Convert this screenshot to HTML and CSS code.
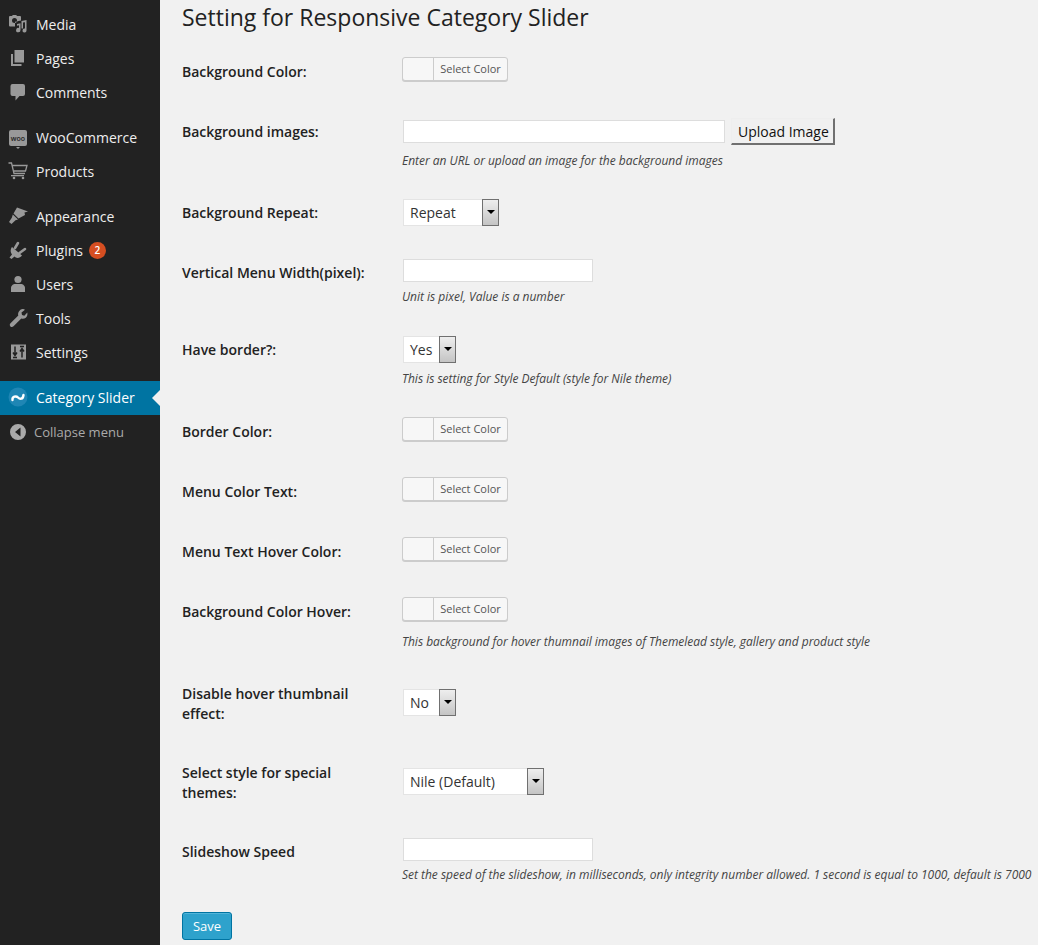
FILE: index.html
```html
<!DOCTYPE html>
<html lang="en">
<head>
<meta charset="utf-8">
<title>Setting for Responsive Category Slider</title>
<link rel="stylesheet" href="styles.css">
</head>
<body>
<div class="layout">
<nav class="sidebar">
  <ul class="menu">
    <li class="item"><svg class="icon" viewBox="0 0 20 20"><path fill-rule="evenodd" d="M2 2h2l.8-1h3.400l.8 1H12a1 1 0 0 1 1 1v3.500L7 7.800V12.500H2a1 1 0 0 1-1-1V3a1 1 0 0 1 1-1zM6.500 4a2.500 2.500 0 1 0 0 5 2.500 2.500 0 0 0 0-5z"/><path d="M9 10l3.500-.7v6.700a2.200 2.200 0 1 1-1.500-2v-2.700l-2 .4z"/><path d="M13.500 7l5-1v10.500a2 2 0 1 1-1.500-1.900V8.200l-2 .4V14.500h-1.500z"/></svg><span>Media</span></li>
    <li class="item"><svg class="icon" viewBox="0 0 20 20"><path d="M6.500 2H16v12.500H6.500z"/><path d="M3 6h2v10h8.500v2H3z"/></svg><span>Pages</span></li>
    <li class="item"><svg class="icon" viewBox="0 0 20 20"><path d="M4.500 2h10.500a2 2 0 0 1 2 2v8a2 2 0 0 1-2 2h-3.500l-4 4.500V14H4.500a2 2 0 0 1-2-2V4a2 2 0 0 1 2-2z"/></svg><span>Comments</span></li>
    <li class="item gap"><span class="woo"><span class="woo-text">woo</span></span><span>WooCommerce</span></li>
    <li class="item"><svg class="icon" viewBox="0 0 20 20"><path class="line" d="M0.500 2h3l2.500 10.500h11M4.500 4.500H19l-1.500 5.500H6"/><rect x="3" y="14" width="13" height="1.300"/><circle cx="6" cy="17" r="1.300"/><circle cx="15" cy="17" r="1.300"/></svg><span>Products</span></li>
    <li class="item gap"><svg class="icon" viewBox="0 0 20 20"><path d="M9 1.500l11 4-3.500 1 .5 2.500-6.500 3.500-5-5z"/><path d="M4.800 8.500l5.200 5-2.500.8L3.500 18l-2.500-2 2.800-4.200z"/></svg><span>Appearance</span></li>
    <li class="item"><svg class="icon" viewBox="0 0 20 20"><path d="M4 7l10 8.500c-2 3-6 3-7.500 1L3.500 19l-2-1.500 2.500-3c-2-2.500-1.500-5.500 0-7.500z"/><path class="pin" d="M7 8l3-5M11.500 13l5.500-4"/></svg><span>Plugins</span><span class="badge">2</span></li>
    <li class="item"><svg class="icon" viewBox="0 0 20 20"><circle cx="10" cy="5.500" r="3.600"/><path d="M3 18v-4c0-2.500 2.500-4 4-4h6c1.500 0 4 1.500 4 4v4z"/></svg><span>Users</span></li>
    <li class="item"><svg class="icon" viewBox="0 0 20 20"><path d="M14.500 1c1 0 2 .3 2.500.7L13.500 4.500l.5 2.500 2.300.7 3-3.200c.5 2.200-.2 4-1.500 5.200-1.300 1.100-3 1.300-4.500.8L5.500 18.300c-.9.900-2.300.9-3.100.1-.9-.9-.8-2.300.1-3.100L10.300 7.600c-.5-1.700-.1-3.400 1-4.700C12.200 1.800 13.300 1 14.500 1z"/></svg><span>Tools</span></li>
    <li class="item"><svg class="icon" viewBox="0 0 20 20"><rect x="3" y="2.500" width="15" height="15"/><path class="cut" d="M7 4.500v8.500M5 10.500l2 3 2-3M5 15.500h4M14 15.500V7M12 9.500l2-3 2 3M12 4.500h4"/></svg><span>Settings</span></li>
    <li class="item gap current"><svg class="logo" viewBox="0 0 20 20"><circle cx="10" cy="10" r="9.500"/><path d="M4.500 13c-.5-3.500 3.500-4.500 5.500-2.500s5 2 5.500-2.500"/></svg><span>Category Slider</span></li>
    <li class="item collapse"><svg class="icon" viewBox="0 0 20 20"><path fill-rule="evenodd" d="M10 2a8 8 0 1 1 0 16 8 8 0 0 1 0-16zM12.500 5.500L7 10l5.500 4.500z"/></svg><span>Collapse menu</span></li>
  </ul>
</nav>
<main class="content">
  <h2 class="title">Setting for Responsive Category Slider</h2>
  <table class="form">
    <tr class="row-color"><th>Background Color:</th><td><div class="picker"><span class="swatch"></span><span class="picker-label">Select Color</span></div></td></tr>
    <tr class="row-upload"><th>Background images:</th><td><div class="upload"><span class="input input-long"></span><span class="upload-btn">Upload Image</span></div><p class="desc desc-low">Enter an URL or upload an image for the background images</p></td></tr>
    <tr class="row-color"><th>Background Repeat:</th><td><div class="select select-repeat"><span class="select-value">Repeat</span><span class="arrow"></span></div></td></tr>
    <tr class="row-desc"><th>Vertical Menu Width(pixel):</th><td><span class="input input-short"></span><p class="desc">Unit is pixel, Value is a number</p></td></tr>
    <tr class="row-tall"><th>Have border?:</th><td><div class="select select-yes"><span class="select-value">Yes</span><span class="arrow"></span></div><p class="desc desc-low">This is setting for Style Default (style for Nile theme)</p></td></tr>
    <tr class="row-color"><th>Border Color:</th><td><div class="picker"><span class="swatch"></span><span class="picker-label">Select Color</span></div></td></tr>
    <tr class="row-color"><th>Menu Color Text:</th><td><div class="picker"><span class="swatch"></span><span class="picker-label">Select Color</span></div></td></tr>
    <tr class="row-color"><th>Menu Text Hover Color:</th><td><div class="picker"><span class="swatch"></span><span class="picker-label">Select Color</span></div></td></tr>
    <tr class="row-tall"><th>Background Color Hover:</th><td><div class="picker"><span class="swatch"></span><span class="picker-label">Select Color</span></div><p class="desc desc-picker">This background for hover thumnail images of Themelead style, gallery and product style</p></td></tr>
    <tr class="row-two"><th>Disable hover thumbnail effect:</th><td><div class="select select-no"><span class="select-value">No</span><span class="arrow"></span></div></td></tr>
    <tr class="row-two"><th>Select style for special themes:</th><td><div class="select select-style"><span class="select-value">Nile (Default)</span><span class="arrow"></span></div></td></tr>
    <tr class="row-desc"><th>Slideshow Speed</th><td><span class="input input-short"></span><p class="desc desc-high">Set the speed of the slideshow, in milliseconds, only integrity number allowed. 1 second is equal to 1000, default is 7000</p></td></tr>
  </table>
  <div class="actions"><span class="save">Save</span></div>
</main>
</div>
</body>
</html>
```
FILE: styles.css
```css
* { box-sizing: border-box; }
html, body { margin: 0; height: 945px; overflow: hidden; }
body { background: #f1f1f1; color: #444; font-family: "Open Sans", "Liberation Sans", sans-serif; font-size: 13px; }
.layout { display: flex; height: 945px; }
.sidebar { width: 160px; flex: none; background: #222; padding-top: 8px; }
.menu { list-style: none; margin: 0; padding: 0; }
.item { height: 34px; display: flex; align-items: center; padding: 0 0 2px 8px; color: #eee; font-size: 14px; position: relative; }
.item.gap { margin-top: 11px; }
.icon { width: 20px; height: 20px; margin-right: 8px; fill: #999; flex: none; }
.icon .line { fill: none; stroke: #999; stroke-width: 1.300; }
.icon .cut { fill: none; stroke: #222; stroke-width: 1.500; }
.icon .pin { fill: none; stroke: #999; stroke-width: 2.600; stroke-linecap: round; }
.woo { width: 18px; height: 16px; margin: 2px 9px 0 1px; flex: none; background: #999; border-radius: 2px; display: flex; align-items: center; justify-content: center; position: relative; }
.woo::after { content: ""; position: absolute; left: 7px; bottom: -3px; border: 2px solid transparent; border-top-color: #999; border-bottom: 0; }
.woo-text { font-size: 7px; line-height: 1; color: #222; font-weight: 600; }
.badge { margin-left: 6px; width: 17px; height: 17px; border-radius: 50%; background: #d54e21; color: #fff; font-size: 10px; font-weight: 600; display: flex; align-items: center; justify-content: center; }
.current { background: #0074a2; color: #fff; }
.current::after { content: ""; position: absolute; right: 0; top: 50%; margin-top: -8px; border: 8px solid transparent; border-right-color: #f1f1f1; border-left: 0; }
.logo { width: 20px; height: 20px; margin-right: 8px; flex: none; }
.logo circle { fill: #1f86b4; }
.logo path { fill: none; stroke: #fff; stroke-width: 2.400; stroke-linecap: round; }
.collapse { color: #aaa; font-size: 13px; padding-bottom: 0; }
.collapse .icon { margin-right: 6px; fill: #aaa; }
.content { flex: 1; padding-left: 22px; min-width: 0; }
.title { margin: 0; padding: 0; font-size: 23px; font-weight: 400; line-height: 35px; color: #222; height: 42px; }
.form { border-collapse: collapse; table-layout: fixed; width: 856px; }
th { width: 220px; text-align: left; vertical-align: top; font-size: 14px; font-weight: 600; line-height: 20px; color: #222; padding: 20px 20px 0 0; }
td { vertical-align: top; padding: 15px 0 0; }
.row-color { height: 60px; }
.row-upload { height: 81px; }
.row-desc { height: 77px; }
.row-tall { height: 82px; }
.row-two { height: 79px; }
.row-two td { vertical-align: middle; padding: 0 0 3px; }
.picker { display: inline-flex; vertical-align: top; height: 24px; width: 106px; background: #f7f7f7; border: 1px solid #ccc; border-radius: 3px; box-shadow: 0 1px 0 #ccc; }
.swatch { width: 31px; border-right: 1px solid #ccc; }
.picker-label { flex: 1; font-size: 11px; line-height: 22px; color: #555; text-align: center; }
.input { display: block; height: 23px; margin-left: 1px; background: #fff; border: 1px solid #ddd; }
.input-long { width: 322px; }
.input-short { width: 190px; margin-top: 1px; }
.upload { display: flex; gap: 6px; align-items: center; margin-top: 1px; }
.upload-btn { height: 27px; padding: 0 4px 0 6px; font-size: 14px; line-height: 25px; color: #111; background: #f0f0f0; border-style: solid; border-color: #eee #707070 #707070 #eee; border-width: 1px 2px 2px 1px; }
.desc { margin: 6px 0 0; font-size: 12px; font-style: italic; line-height: 18px; color: #444; white-space: nowrap; letter-spacing: -0.015px; }
.desc-low { margin-top: 7px; }
.desc-picker { margin-top: 12px; }
.desc-high { margin-top: 5px; }
.select { display: flex; align-items: stretch; height: 27px; background: #fff; border: 1px solid #e4e4e4; margin: 1px 0 0 1px; position: relative; }
.row-two .select { margin-top: 0; }
.select-repeat { width: 96px; }
.select-yes { width: 53px; }
.select-no { width: 53px; }
.select-style { width: 141px; }
.select-value { flex: 1; font-size: 14px; line-height: 25px; padding-left: 6px; color: #333; }
.arrow { width: 17px; margin: -1px -1px -1px 0; border: 1px solid #707070; background: linear-gradient(#eee, #c4c4c4); position: relative; }
.arrow::after { content: ""; position: absolute; left: 4px; top: 10px; border: 4px solid transparent; border-top-color: #000; border-bottom: 0; }
.actions { margin-top: 13px; }
.save { display: inline-block; width: 50px; height: 28px; background: #2ea2cc; border: 1px solid #0074a2; border-radius: 3px; color: #fff; font-size: 13px; line-height: 26px; text-align: center; box-shadow: inset 0 1px 0 rgba(120,200,230,.5); }
```
